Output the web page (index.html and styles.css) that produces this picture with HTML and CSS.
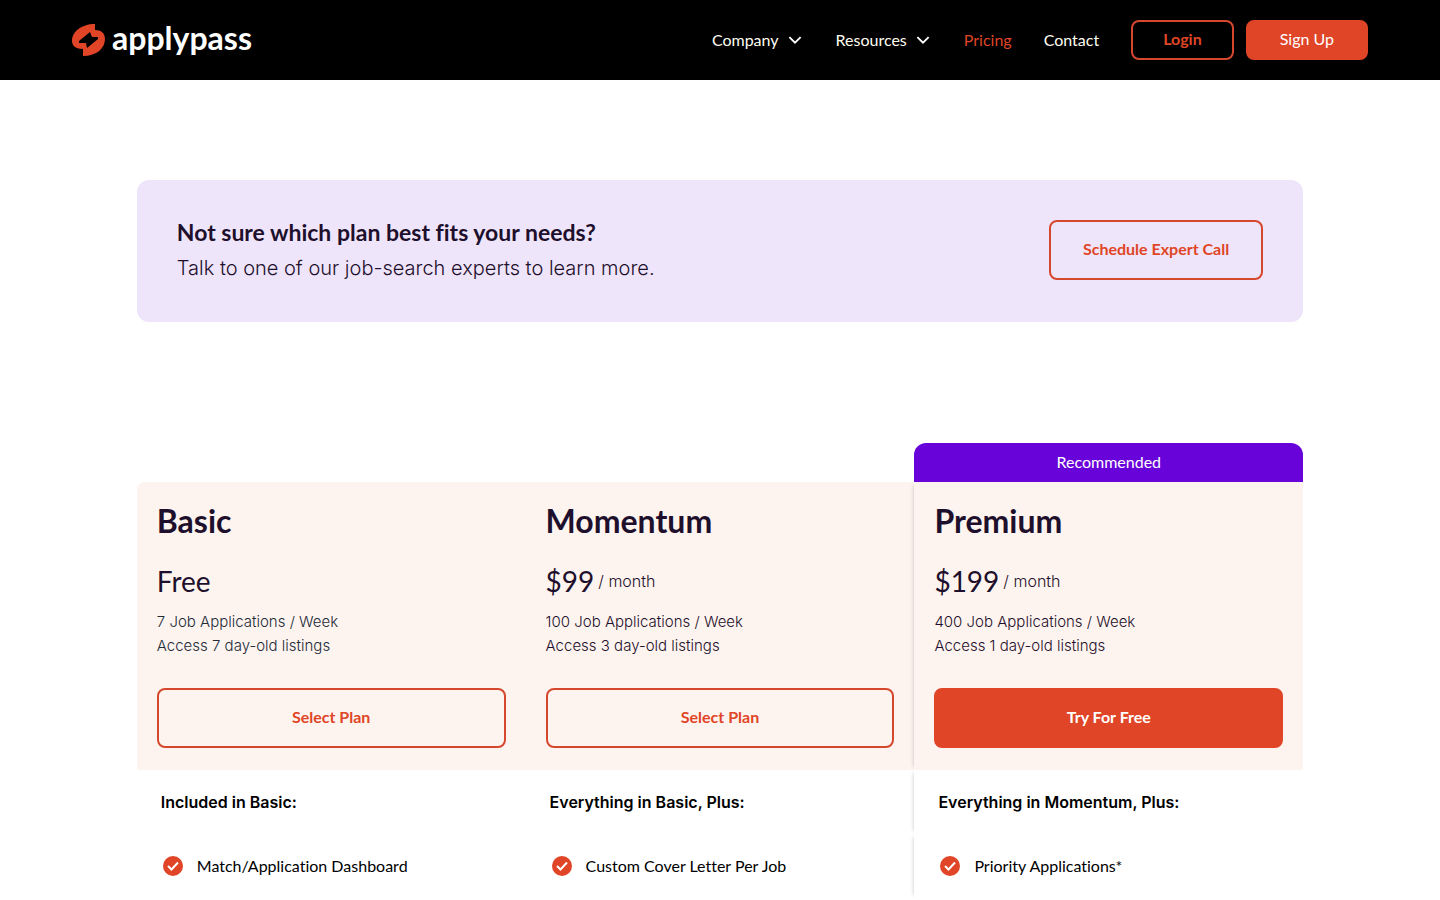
FILE: index.html
```html
<!DOCTYPE html>
<html lang="en">

<head>
  <meta charset="UTF-8">
  <meta name="viewport" content="width=device-width, initial-scale=1.0">
  <title>Pricing | ApplyPass</title>
  <link rel="stylesheet" href="styles.css">
</head>

<body>
  <header class="navbar">
    <a href="#" class="brand">
      <svg class="brand-mark" viewBox="0 0 34 32" aria-hidden="true">
        <path fill="#df4526" fill-rule="evenodd" d="M23 0V6C29 6 33 9 33 15C33 24 25 32 11 32V25C4 25 0 22 0 17C0 8 9 0 23 0ZM18 8L7 17V19H14L15 24L26 15V13H20Z" />
      </svg>
      <span class="brand-name">applypass</span>
    </a>
    <nav class="nav">
      <button type="button" class="nav-link">Company
        <svg class="chevron" viewBox="0 0 12 8" aria-hidden="true"><path d="M1 1L6 6L11 1" /></svg>
      </button>
      <button type="button" class="nav-link">Resources
        <svg class="chevron" viewBox="0 0 12 8" aria-hidden="true"><path d="M1 1L6 6L11 1" /></svg>
      </button>
      <a href="#" class="nav-link active">Pricing</a>
      <a href="#" class="nav-link">Contact</a>
      <div class="nav-buttons">
        <a href="#" class="btn btn-small btn-login">Login</a>
        <a href="#" class="btn btn-small btn-fill btn-signup">Sign Up</a>
      </div>
    </nav>
  </header>

  <main class="container">
    <section class="banner">
      <div>
        <h2 class="banner-title">Not sure which plan best fits your needs?</h2>
        <p class="banner-text">Talk to one of our job-search experts to learn more.</p>
      </div>
      <a href="#" class="btn">Schedule Expert Call</a>
    </section>

    <section class="plans">
      <article class="plan">
        <div class="plan-head">
          <h3 class="plan-name">Basic</h3>
          <p class="price">Free</p>
          <p class="plan-text plan-text-basic">7 Job Applications / Week<br>Access 7 day-old listings</p>
          <a href="#" class="btn">Select Plan</a>
        </div>
        <h4 class="plan-subtitle">Included in Basic:</h4>
        <ul class="features">
          <li class="feature">
            <svg class="check" viewBox="0 0 20 20" aria-hidden="true"><circle cx="10" cy="10" r="10" /><path d="M5 10L8.5 13.5L15 6.5" /></svg>
            Match/Application Dashboard
          </li>
        </ul>
      </article>

      <article class="plan">
        <div class="plan-head">
          <h3 class="plan-name">Momentum</h3>
          <p class="price">$99 <span class="per">/ month</span></p>
          <p class="plan-text">100 Job Applications / Week<br>Access 3 day-old listings</p>
          <a href="#" class="btn">Select Plan</a>
        </div>
        <h4 class="plan-subtitle">Everything in Basic, Plus:</h4>
        <ul class="features">
          <li class="feature">
            <svg class="check" viewBox="0 0 20 20" aria-hidden="true"><circle cx="10" cy="10" r="10" /><path d="M5 10L8.5 13.5L15 6.5" /></svg>
            Custom Cover Letter Per Job
          </li>
        </ul>
      </article>

      <article class="plan premium">
        <div class="badge">Recommended</div>
        <div class="plan-head">
          <h3 class="plan-name">Premium</h3>
          <p class="price">$199 <span class="per">/ month</span></p>
          <p class="plan-text">400 Job Applications / Week<br>Access 1 day-old listings</p>
          <a href="#" class="btn btn-fill">Try For Free</a>
        </div>
        <h4 class="plan-subtitle">Everything in Momentum, Plus:</h4>
        <ul class="features">
          <li class="feature">
            <svg class="check" viewBox="0 0 20 20" aria-hidden="true"><circle cx="10" cy="10" r="10" /><path d="M5 10L8.5 13.5L15 6.5" /></svg>
            Priority Applications*
          </li>
        </ul>
      </article>
    </section>
  </main>
</body>

</html>
```
FILE: styles.css
```css
* {
  margin: 0;
  padding: 0;
  list-style: none;
  box-sizing: border-box;
}

body {
  font-family: Lato, sans-serif;
  font-size: 16px;
  line-height: 24px;
  font-variant-ligatures: none;
  color: #1e102c;
  background: #fff;
}

a {
  color: inherit;
  text-decoration: none;
}

/* navbar */
.navbar {
  display: flex;
  align-items: center;
  justify-content: space-between;
  min-height: 80px;
  padding: 0 5%;
  background: #000;
}

.brand {
  display: flex;
  align-items: center;
  gap: 6px;
  color: #fff;
}

.brand-mark {
  width: 34px;
  height: 32px;
}

.brand-name {
  font-size: 32px;
  font-weight: 700;
  line-height: 32px;
  padding-bottom: 4px;
}

.nav {
  display: flex;
  align-items: center;
  gap: 32px;
}

.nav-link {
  display: flex;
  align-items: center;
  gap: 9px;
  border: 0;
  background: none;
  color: #fffdf0;
  font: inherit;
  cursor: pointer;
}

.nav-link.active {
  color: #df4526;
}

.chevron {
  width: 14px;
  height: 9px;
  margin-right: 2px;
  fill: none;
  stroke: #fff;
  stroke-width: 1.6;
}

.nav-buttons {
  display: flex;
  gap: 12px;
}

/* buttons */
.btn {
  display: flex;
  align-items: center;
  justify-content: center;
  min-height: 60px;
  padding: 0 32px 2px;
  border: 2px solid #d5482e;
  border-radius: 8px;
  color: #df4526;
  font-weight: 700;
}

.btn-small {
  min-height: 40px;
}

.btn-login {
  padding: 0 30px 2px;
}

.btn-fill {
  border-color: #df4526;
  background: #df4526;
  color: #fff;
}

.btn-signup {
  font-weight: 400;
}

/* content */
.container {
  width: 81%;
  margin: 0 auto;
  padding-top: 100px;
}

.banner {
  display: flex;
  align-items: center;
  justify-content: space-between;
  gap: 40px;
  min-height: 142px;
  padding: 32px 40px 34px;
  border-radius: 12px;
  background: #efe5fb;
}

.banner-title {
  font-size: 23px;
  line-height: 36px;
  font-weight: 700;
}

.banner-text {
  font-family: Inter, sans-serif;
  font-size: 20px;
  line-height: 36px;
  font-weight: 300;
}

.plans {
  display: grid;
  grid-template-columns: repeat(3, 1fr);
  align-items: end;
  margin-top: 121px;
}

.badge {
  padding: 7px 0 8px;
  border-radius: 12px 12px 0 0;
  background: #6803da;
  color: #fff;
  text-align: center;
}

.plan-head {
  padding: 20px 20px 22px;
  background: #fef4ef;
}

.plan:first-child .plan-head {
  border-radius: 8px 0 0 0;
}

.plan-name {
  font-size: 32px;
  line-height: 38px;
  font-weight: 700;
}

.price {
  display: flex;
  align-items: center;
  gap: 4px;
  margin: 24px 0 12px;
  font-size: 28px;
  line-height: 34px;
}

.per,
.plan-text {
  font-family: Inter, sans-serif;
  font-size: 15px;
  line-height: 24px;
  font-weight: 300;
}

.per {
  font-size: 16px;
}

.plan-text {
  margin-bottom: 30px;
}

.plan-text-basic {
  color: #222b38;
}

.plan-subtitle {
  padding: 20px 24px;
  color: #000;
  font-family: Inter, sans-serif;
  font-size: 16px;
  font-weight: 600;
}

.feature {
  display: flex;
  align-items: center;
  gap: 14px;
  min-height: 64px;
  padding: 0 26px;
  color: #000;
}

.check {
  width: 20px;
  height: 20px;
  fill: #df4526;
}

.check path {
  fill: none;
  stroke: #fff;
  stroke-width: 2;
}

/* thin shadow down the left side of each premium cell */
.premium .plan-head,
.premium .plan-subtitle,
.premium .feature {
  box-shadow: -3px 0 4px -3px rgba(20, 20, 60, 0.25);
  clip-path: inset(0 0 0 -8px);
}
```
